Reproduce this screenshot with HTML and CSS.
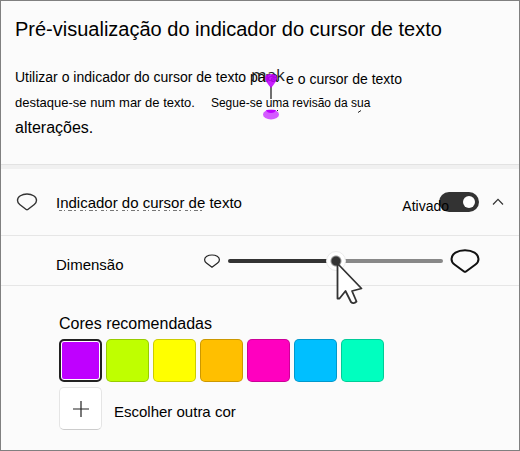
FILE: index.html
```html
<!DOCTYPE html>
<html lang="pt">
<head>
<meta charset="utf-8">
<meta name="viewport" content="width=device-width, initial-scale=1">
<title>Indicador do cursor de texto</title>
<link rel="stylesheet" href="styles.css">
</head>
<body>
<main class="panel">
  <section class="preview">
    <h1 class="title">Pré-visualização do indicador do cursor de texto</h1>
    <div class="sample">
      <p class="line"><span class="anchor">Utilizar o indicador do cursor de texto para<span class="typed">mak</span>
        <svg class="caret" width="16" height="46" viewBox="0 0 16 46" aria-hidden="true">
          <path d="M8 12V25" stroke="#222" stroke-width="1.3"/>
          <path d="M2 4Q2 0 8 0T14 4Q14 7 8 14Q2 7 2 4Z" fill="#bf00ff" opacity=".88"/>
          <ellipse cx="8" cy="40.500" rx="8" ry="5" fill="#d45cff"/>
          <path d="M3 36H13Q12 39 8 39T3 36Z" fill="#bf00ff"/>
          <path d="M14 36l1 1" stroke="#222"/>
        </svg></span><span class="after">e o cursor de texto</span></p>
      <p class="line second"><span>destaque-se num mar de texto.</span><span class="small">Segue-se uma revisão da sua<svg class="tail" width="4" height="3" viewBox="0 0 4 3" aria-hidden="true"><path d="M0 2.500L3 .5" stroke="#222"/></svg></span></p>
      <p class="line large">alterações.</p>
    </div>
  </section>

  <section class="row toggle-row">
    <svg class="row-icon" width="22" height="18" viewBox="0 0 22 18" aria-hidden="true"><path d="M11 1C16 1 20.500 3.500 20.500 7.300C20.500 9.200 19.800 10.300 18.300 11.500L11.800 16.500Q11 17.100 10.200 16.500L3.700 11.500C2.200 10.300 1.500 9.200 1.500 7.300C1.500 3.500 6 1 11 1Z" fill="none" stroke="#333" stroke-width="1.400"/></svg>
    <label class="name" for="indicator">Indicador do cursor de texto<svg class="dashes" width="150" height="1" viewBox="0 0 150 1" aria-hidden="true"><path d="M1 .5H147" stroke="#777" stroke-dasharray="3 2 1 3 4 2 2 4"/></svg></label>
    <label class="state" for="indicator">Ativado</label>
    <input class="switch" id="indicator" type="checkbox" role="switch" checked>
    <button class="collapse" type="button" aria-label="Recolher"><svg width="12" height="8" viewBox="0 0 12 8" aria-hidden="true"><path d="M1 6.500L6 1.300L11 6.500" fill="none" stroke="#333" stroke-width="1.200"/></svg></button>
  </section>

  <section class="row size-row">
    <label class="name" for="size">Dimensão</label>
    <svg class="size-small" width="18" height="16" viewBox="0 0 18 16" aria-hidden="true"><path d="M9 2C13 2 16.400 3.900 16.400 6.800C16.400 8.300 15.800 9.200 14.600 10.100L9 14.300L3.400 10.100C2.200 9.200 1.600 8.300 1.600 6.800C1.600 3.900 5 2 9 2Z" fill="none" stroke="#222" stroke-width="1.200"/></svg>
    <div class="slider-box">
      <input class="slider" id="size" type="range" min="0" max="100" value="50">
      <svg class="pointer" width="28" height="44" viewBox="0 0 28 44" aria-hidden="true"><path d="M1.500 1.500V36.500H3.500L9.500 29L15 40Q17.500 42.500 20.500 39.500L16 29L25.500 26.500Z" fill="#fff" stroke="#333" stroke-width="1.800" stroke-linejoin="round"/></svg>
    </div>
    <svg class="size-large" width="30" height="24" viewBox="0 0 30 24" aria-hidden="true"><path d="M15 1.200C22.500 1.200 28.500 4.800 28.500 10C28.500 12.500 27.500 14 25.500 15.500L16 22.500Q15 23.200 14 22.500L4.500 15.500C2.500 14 1.500 12.500 1.500 10C1.500 4.800 7.500 1.200 15 1.200Z" fill="none" stroke="#111" stroke-width="2"/></svg>
  </section>

  <section class="colors">
    <h2 class="subtitle">Cores recomendadas</h2>
    <div class="swatches">
      <button class="swatch violet selected" type="button" aria-label="Violeta" aria-pressed="true"></button>
      <button class="swatch lime" type="button" aria-label="Lima"></button>
      <button class="swatch yellow" type="button" aria-label="Amarelo"></button>
      <button class="swatch orange" type="button" aria-label="Laranja"></button>
      <button class="swatch pink" type="button" aria-label="Rosa"></button>
      <button class="swatch blue" type="button" aria-label="Azul"></button>
      <button class="swatch mint" type="button" aria-label="Verde-água"></button>
    </div>
    <div class="other">
      <button class="add" id="add" type="button" aria-labelledby="add-label"><svg width="16" height="16" viewBox="0 0 16 16" aria-hidden="true"><path d="M8 0V16M0 8H16" stroke="#222" stroke-width="1.200"/></svg></button>
      <label class="name" id="add-label" for="add">Escolher outra cor</label>
    </div>
  </section>
</main>
</body>
</html>
```
FILE: styles.css
```css
* {
  box-sizing: border-box;
}

body {
  margin: 0;
  background: #fbfbfb;
  color: #000;
  font-family: "Liberation Sans", Arial, sans-serif;
  font-size: 14px;
}

h1,
h2,
p {
  margin: 0;
  font-weight: 400;
}

button {
  padding: 0;
  border: 0;
  background: none;
}

svg {
  display: block;
}

.panel {
  min-height: 100vh;
  border: 1px solid #808080;
}

.preview {
  padding: 16px 14px 24px;
  border-bottom: 1px solid #e2e2e2;
}

.title {
  font-size: 20px;
  line-height: 24px;
}

.sample {
  padding-top: 23px;
}

.line {
  display: flex;
  gap: 8px;
  line-height: 26px;
  white-space: nowrap;
}

.anchor {
  position: relative;
}

.typed {
  position: absolute;
  right: -7px;
  top: -2px;
  color: #222;
  font-family: "Open Sans", sans-serif;
  font-size: 17px;
}

.caret {
  position: absolute;
  right: -1px;
  top: 10px;
}

.after {
  padding-top: 2px;
}

.second {
  gap: 16px;
  margin-top: -2px;
  font-size: 13px;
}

.small {
  position: relative;
  font-size: 12px;
}

.tail {
  position: absolute;
  right: 8px;
  bottom: 3px;
}

.large {
  font-size: 16px;
  line-height: 24px;
}

.row {
  display: flex;
  align-items: center;
  border-bottom: 1px solid #e6e6e6;
}

.toggle-row {
  min-height: 71px;
  padding: 0 15px;
  border-top: 4px solid #f0f0f0;
}

.row-icon {
  margin-right: 18px;
}

.name {
  position: relative;
  font-size: 15px;
}

.dashes {
  position: absolute;
  left: 2px;
  bottom: 0;
}

.state {
  z-index: 1;
  margin: 8px -10px 0 auto;
}

.switch {
  appearance: none;
  width: 40px;
  height: 20px;
  margin: 0;
  padding: 4px;
  border-radius: 10px;
  background: #333;
}

.switch::before {
  content: "";
  display: block;
  width: 12px;
  height: 12px;
  border-radius: 50%;
  background: #fff;
}

.switch:checked::before {
  margin-left: auto;
}

.collapse {
  margin-left: 13px;
}

.size-row {
  min-height: 50px;
  padding: 0 39px 0 55px;
}

.size-row .name {
  width: 147px;
  padding-top: 8px;
}

.slider-box {
  position: relative;
  display: flex;
  flex: 1;
  margin: 0 7px;
}

.slider {
  appearance: none;
  width: 100%;
  height: 20px;
  margin: 0;
  background: none;
}

.slider::-webkit-slider-runnable-track {
  height: 4px;
  border-radius: 2px;
  background: linear-gradient(to right, #333 50%, #888 50%);
}

.slider::-webkit-slider-thumb {
  appearance: none;
  width: 20px;
  height: 20px;
  margin-top: -8px;
  border: 1px solid #ebebeb;
  border-radius: 50%;
  background: radial-gradient(circle, #333 4px, #fff 6px);
}

.pointer {
  position: absolute;
  left: 50%;
  top: 11px;
}

.colors {
  padding: 28px 14px 20px 58px;
}

.subtitle {
  font-size: 16px;
  line-height: 20px;
}

.swatches {
  display: flex;
  gap: 4px;
  padding-top: 5px;
}

.swatch {
  width: 43px;
  height: 43px;
  border: 1px solid #0003;
  border-radius: 5px;
}

.selected {
  border: 2px solid #222;
  box-shadow: inset 0 0 0 1px #fff;
}

.violet { background: #bf00ff; }
.lime { background: #bfff00; }
.yellow { background: #ff0; }
.orange { background: #ffbf00; }
.pink { background: #ff00bf; }
.blue { background: #00bfff; }
.mint { background: #00ffbf; }

.other {
  display: flex;
  align-items: center;
  gap: 12px;
  padding-top: 5px;
}

.other .name {
  padding-top: 6px;
}

.add {
  display: grid;
  place-items: center;
  width: 43px;
  height: 43px;
  border: 1px solid #e5e5e5;
  border-bottom-color: #ccc;
  border-radius: 5px;
  background: #fff;
}
```
